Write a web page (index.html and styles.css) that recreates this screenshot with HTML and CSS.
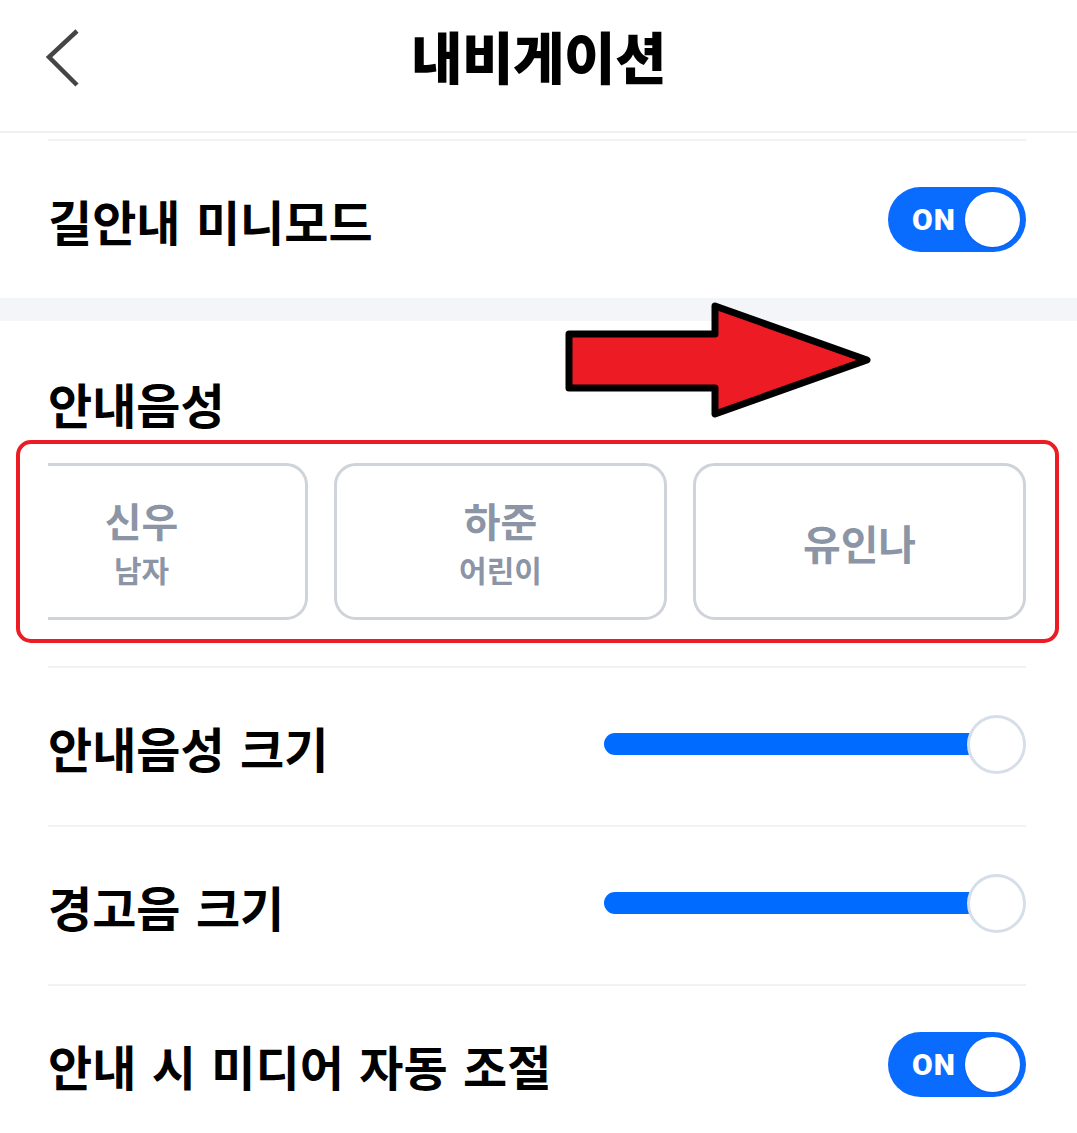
FILE: index.html
```html
<!DOCTYPE html>
<html lang="ko">
<head>
<meta charset="utf-8">
<title>내비게이션</title>
<link rel="stylesheet" href="styles.css">
</head>
<body>
<div class="screen">
  <header class="topbar">
    <button class="back" aria-label="뒤로">
      <svg width="40" height="60" viewBox="0 0 40 60"><polyline points="33,3 5,29 33,57" fill="none" stroke="#454545" stroke-width="4.5" stroke-linejoin="miter"/></svg>
    </button>
    <h1 class="title">내비게이션</h1>
  </header>

  <section class="group">
    <div class="rule"></div>
    <div class="row">
      <span class="label">길안내 미니모드</span>
      <div class="toggle"><span class="toggle-text">ON</span><span class="knob"></span></div>
    </div>
  </section>

  <div class="band"></div>

  <section class="group voice">
    <h2 class="label heading">안내음성</h2>
    <div class="voices">
      <div class="voice-track">
        <div class="voice-card"><span class="vname">신우</span><span class="vdesc">남자</span></div>
        <div class="voice-card"><span class="vname">하준</span><span class="vdesc">어린이</span></div>
        <div class="voice-card"><span class="vname big">유인나</span></div>
      </div>
    </div>
    <div class="rule"></div>
    <div class="row">
      <span class="label">안내음성 크기</span>
      <div class="slider"><div class="track"></div><span class="thumb"></span></div>
    </div>
    <div class="rule"></div>
    <div class="row">
      <span class="label">경고음 크기</span>
      <div class="slider"><div class="track"></div><span class="thumb"></span></div>
    </div>
    <div class="rule"></div>
    <div class="row">
      <span class="label">안내 시 미디어 자동 조절</span>
      <div class="toggle"><span class="toggle-text">ON</span><span class="knob"></span></div>
    </div>
  </section>

  <!-- highlight frame around the voice picker -->
  <div class="mark-frame"></div>
  <svg class="mark-arrow" width="320" height="130" viewBox="0 0 320 130">
    <polygon points="8,32 154,32 154,4 306,58 154,112 154,86 8,86" fill="#ed1c24" stroke="#000" stroke-width="7" stroke-linejoin="round"/>
  </svg>
</div>
</body>
</html>
```

FILE: styles.css
```css
* { box-sizing: border-box; }

html, body {
  margin: 0;
  padding: 0;
  background: #fff;
}

body {
  font-family: "Noto Sans CJK KR", "Noto Sans", sans-serif;
  color: #000;
  overflow: hidden;
}

.screen {
  position: relative;
  width: 1077px;
  height: 1133px;
  overflow: hidden;
}

.topbar {
  height: 133px;
  border-bottom: 2px solid #eff0f2;
  display: flex;
  align-items: flex-start;
  justify-content: center;
  position: relative;
}

.back {
  position: absolute;
  left: 44px;
  top: 28px;
  border: 0;
  background: none;
  padding: 0;
  width: 40px;
  height: 60px;
}

.back svg { display: block; }

.title {
  margin: 0;
  margin-top: 17px;
  font-size: 56px;
  font-weight: 900;
  line-height: 76px;
  letter-spacing: -0.5px;
}

.group {
  padding: 0 51px 0 48px;
}

.group:first-of-type { padding-top: 6px; }

.rule {
  height: 2px;
  background: #f1f2f4;
}

.row {
  height: 157px;
  display: flex;
  align-items: center;
  justify-content: space-between;
}

.label {
  font-size: 48px;
  font-weight: 700;
  letter-spacing: 0;
  word-spacing: 2px;
  line-height: 60px;
  margin: 0;
}

.band {
  height: 23px;
  background: #f4f5f8;
}

.voice { padding-top: 52px; }

.heading { margin-bottom: 30px; }

.voices {
  overflow: hidden;
  margin-bottom: 46px;
}

.voice-track {
  display: flex;
  gap: 26px;
  margin-left: -73px;
}

.voice-card {
  flex: 0 0 333px;
  height: 157px;
  border: 3px solid #cfd3da;
  border-radius: 22px;
  display: flex;
  flex-direction: column;
  align-items: center;
  justify-content: center;
  color: #8b95a5;
  font-weight: 700;
}

.vname {
  font-size: 40px;
  line-height: 50px;
}

.vname.big { font-size: 41px; }

.vdesc {
  font-size: 30px;
  line-height: 40px;
  font-weight: 600;
  margin-top: 4px;
}

.toggle {
  width: 138px;
  height: 65px;
  border-radius: 33px;
  background: #0a6cff;
  display: flex;
  align-items: center;
  justify-content: space-between;
  padding: 0 6px 0 24px;
}

.toggle-text {
  font-family: "Roboto", "Liberation Sans", sans-serif;
  font-weight: 900;
  font-size: 30px;
  color: #fff;
  letter-spacing: 1px;
}

.knob {
  width: 55px;
  height: 55px;
  border-radius: 50%;
  background: #fff;
  box-shadow: 0 1px 3px rgba(0, 0, 0, 0.15);
}

.slider {
  position: relative;
  width: 422px;
  height: 60px;
  margin-top: -6px;
  display: flex;
  align-items: center;
}

.track {
  width: 395px;
  height: 22px;
  border-radius: 11px;
  background: #006cff;
}

.thumb {
  position: absolute;
  right: 0;
  top: 1px;
  width: 59px;
  height: 59px;
  border-radius: 50%;
  background: #fff;
  border: 3px solid #d6dee9;
}

.mark-frame {
  position: absolute;
  left: 16px;
  top: 440px;
  width: 1043px;
  height: 203px;
  border: 4px solid #ed1c24;
  border-radius: 15px;
}

.mark-arrow {
  position: absolute;
  left: 561px;
  top: 302px;
}
```
